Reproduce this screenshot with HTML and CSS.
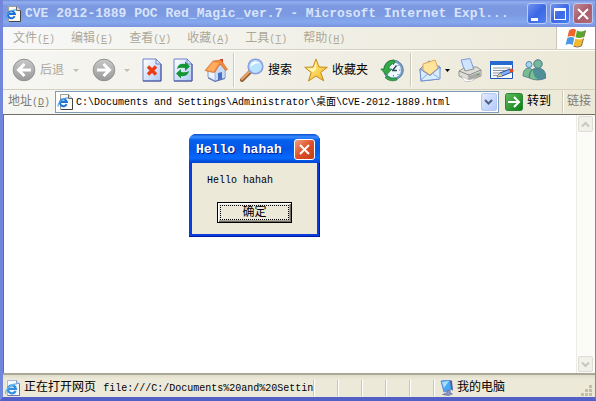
FILE: index.html
```html
<!DOCTYPE html>
<html lang="zh-CN">
<head>
    <meta charset="UTF-8">
    <title>CVE 2012-1889 POC Red_Magic_ver.7</title>
    <link rel="stylesheet" href="styles.css">
</head>
<body>

<!-- shared shapes -->
<svg class="defs" width="0" height="0" aria-hidden="true">
    <defs>
        <linearGradient id="g_gray" x1="0" y1="0" x2="0" y2="1"><stop offset="0" stop-color="#c9c9c9"/><stop offset="1" stop-color="#999"/></linearGradient>
        <linearGradient id="g_page" x1="0" y1="0" x2="1" y2="1"><stop offset="0" stop-color="#fff"/><stop offset="1" stop-color="#adc9f5"/></linearGradient>
        <linearGradient id="g_green" x1="0" y1="0" x2="1" y2="1"><stop offset="0" stop-color="#62bd5d"/><stop offset="1" stop-color="#087a13"/></linearGradient>
        <linearGradient id="g_gold" x1="0" y1="0" x2="1" y2="1"><stop offset="0" stop-color="#fff8a0"/><stop offset="1" stop-color="#f7b520"/></linearGradient>
    </defs>
    <symbol id="ie_page" viewBox="0 0 16 16">
        <path d="M3.500.5h8l4 4v11h-12z" fill="#fbfbf4" stroke="#a09f94"/>
        <path d="M11.500.5v4h4" fill="#ddd" stroke="#666"/>
        <path d="M15.500 4.500v11H4" fill="none" stroke="#444"/>
        <path d="M9.600 10.300A3.500 3.500 0 1 1 9.900 8H3.500" fill="none" stroke="#1f6fd8" stroke-width="2"/>
        <path d="M1.500 12.500C-.5 10 6 3.500 11 4" fill="none" stroke="#4aa5ee" stroke-width="1.200"/>
    </symbol>
    <symbol id="ie_status" viewBox="0 0 16 16">
        <path d="M2.500.5h9l3 3v12h-12z" fill="#f4f8ff" stroke="#a9b8dd"/>
        <path d="M14.500 3.500v12h-12" fill="none" stroke="#6876ae"/>
        <path d="M11.500.5v3h3" fill="#d5e0f7" stroke="#8797c6"/>
        <path d="M10.600 11A4 4 0 1 1 10.900 8.800H3.500" fill="none" stroke="#2f8ede" stroke-width="2.200"/>
        <path d="M1 14C-1 11 6 3.500 12 4" fill="none" stroke="#6bbcf2" stroke-width="1.200"/>
    </symbol>
    <symbol id="arrow_circle" viewBox="0 0 24 24">
        <circle cx="12" cy="12" r="10.800" fill="url(#g_gray)" stroke="#929292"/>
        <path d="M12.500 6L6.500 12l6 6M7 12h12" fill="none" stroke="#fff" stroke-width="3"/>
    </symbol>
    <symbol id="page" viewBox="0 0 20 24">
        <path d="M1 1h13l5 5v17H1z" fill="url(#g_page)" stroke="#6d83c9"/>
        <path d="M14 1v5h5z" fill="#dbe8ff" stroke="#6d83c9"/>
        <path d="M19 6v17H1" fill="none" stroke="#465298"/>
    </symbol>
</svg>

<div class="window">
    <header class="titlebar">
        <svg class="icon16"><use href="#ie_page"/></svg>
        <h1 class="titlebar_text">CVE 2012-1889 POC Red_Magic_ver.7 - Microsoft Internet Expl...</h1>
        <div class="titlebar_buttons">
            <button class="win_btn" aria-label="最小化"><svg width="20" height="20"><path d="M4 14h7v3H4z" fill="#fff"/></svg></button>
            <button class="win_btn" aria-label="最大化"><svg width="20" height="20"><path d="M4 4h12v12H4zm1 3v8h10V7z" fill="#fff" fill-rule="evenodd"/></svg></button>
            <button class="win_btn win_btn_close" aria-label="关闭"><svg width="20" height="20"><path d="M5 5l10 10M15 5L5 15" stroke="#fff" stroke-width="2"/></svg></button>
        </div>
    </header>

    <div class="menubar">
        <nav class="menu">
            <button class="menu_item">文件<span class="en">(<u>F</u>)</span></button>
            <button class="menu_item">编辑<span class="en">(<u>E</u>)</span></button>
            <button class="menu_item">查看<span class="en">(<u>V</u>)</span></button>
            <button class="menu_item">收藏<span class="en">(<u>A</u>)</span></button>
            <button class="menu_item">工具<span class="en">(<u>T</u>)</span></button>
            <button class="menu_item">帮助<span class="en">(<u>H</u>)</span></button>
        </nav>
        <div class="brand">
            <svg width="22" height="20" viewBox="0 0 22 20">
                <path d="M4 2.500Q8-.5 11 2L9.500 9Q6.500 7 2.500 9z" fill="#ef6530"/>
                <path d="M12 2.500q4 2 8.500-.3L18.500 9q-4 2-8 .3z" fill="#58a72d"/>
                <path d="M2.300 10q4-2 7 0l-1.600 7Q4.500 15 .5 17z" fill="#4898e5"/>
                <path d="M10.300 10.500q4 2 8 0L16.500 17.500q-4 2-8 .2z" fill="#f4b82b"/>
                <path d="M8.500 18.200q4 1.800 8-.2l2-7.500M18.700 9.300l1.900-6.800" fill="none" stroke="#634e28" stroke-width=".8"/>
            </svg>
        </div>
    </div>

    <div class="toolbar">
        <button class="tool tool_nav" disabled>
            <svg width="24" height="24"><use href="#arrow_circle"/></svg>
            <span class="tool_text">后退</span>
        </button>
        <button class="tool drop" disabled aria-label="后退列表"></button>
        <button class="tool tool_forward" disabled aria-label="前进">
            <svg width="24" height="24"><g transform="matrix(-1 0 0 1 24 0)"><use href="#arrow_circle"/></g></svg>
        </button>
        <button class="tool drop" disabled aria-label="前进列表"></button>
        <div class="tool_group tool_group_page">
            <button class="tool" aria-label="停止">
                <svg width="20" height="24"><use href="#page"/><path d="M6 8.500l8 8M14 8.500l-8 8" stroke="#f03a14" stroke-width="3.400"/></svg>
            </button>
            <button class="tool" aria-label="刷新">
                <svg width="20" height="24"><use href="#page"/>
                    <path d="M4 11q1-6 8-5V3.500l5 5-5 4.500v-3q-5-1-8 1zM16 13q-1 6-8 5v2.500l-5-5L8 11v3q5 1 8-1z" fill="#159536"/>
                </svg>
            </button>
            <button class="tool" aria-label="主页">
                <svg width="24" height="24" viewBox="0 0 24 24">
                    <path d="M4 11l6-7 11 8v8l-10 3-7-4z" fill="#eef4ff" stroke="#8395cf"/>
                    <path d="M11 13v10l10-3v-9l-5-6z" fill="#c9daf8" stroke="#8498cc" stroke-width=".6"/>
                    <path d="M14 15l4-1v7l-4 1.200z" fill="#4871c4"/>
                    <path d="M16 1h3v6h-3z" fill="#d53f25"/>
                    <path d="M9 3l8-1 6.500 9.500-2 1L16 6l-5 8-2 .5-8-2z" fill="#f08b3c" stroke="#c76728" stroke-width=".6"/>
                    <path d="M9 4L2.500 12l7 1.500L15 5z" fill="#ffac61"/>
                    <path d="M4 20l7 3.500 10-3" fill="none" stroke="#6271aa"/>
                </svg>
            </button>
        </div>
        <div class="tool_group tool_group_find">
            <button class="tool">
                <svg width="24" height="24" viewBox="0 0 24 24">
                    <path d="M10 14L2 22" stroke="#9c6338" stroke-width="4" stroke-linecap="round"/>
                    <path d="M9.500 13.500L2 21" stroke="#e9a46a" stroke-width="2" stroke-linecap="round"/>
                    <circle cx="15.500" cy="8.500" r="7.300" fill="#b8e3ff" stroke="#8a9de0" stroke-width="1.600"/>
                    <path d="M10.500 9q0-5 5-5.500 3 0 4 2-5-1-9 3.500z" fill="#fff"/>
                </svg>
                <span class="tool_text">搜索</span>
            </button>
            <button class="tool">
                <svg width="24" height="24" viewBox="0 0 24 24">
                    <path d="M12 1l3 8 8.300.3-6.600 5.200 3 8.300L12 18l-7.500 5 2.700-8.500L.7 9.300 9 9z" fill="url(#g_gold)" stroke="#c48a1c"/>
                    <path d="M12 4l-2 6.500-6 .2 5 3.300 3-2.500z" fill="#fffbbd"/>
                </svg>
                <span class="tool_text">收藏夹</span>
            </button>
            <button class="tool" aria-label="历史">
                <svg width="24" height="24" viewBox="0 0 24 24">
                    <circle cx="13.500" cy="12" r="9.800" fill="#6fa2c8" stroke="#687c94"/>
                    <circle cx="13.500" cy="12" r="7.500" fill="#eef8ff"/>
                    <path d="M13.500 5.500v1.500M13.500 17v1.500M19 12h1.500M17.500 8l1-1M17.500 16l1 1" stroke="#5485b9"/>
                    <path d="M12 12.500h5M12.500 12.500l4-5" stroke="#33475c" stroke-width="1.400"/>
                    <path d="M14 2Q5 2 4 11H.8L6.500 17 12 11H8.800q.7-5 6.200-6zM7 18q4 4 9 2l1 2q-7 2.500-12-2.500z" fill="#35a948" stroke="#16752a" stroke-width=".7"/>
                </svg>
            </button>
        </div>
        <div class="tool_group tool_group_mail">
            <button class="tool tool_mail" aria-label="邮件">
                <svg width="22" height="24" viewBox="0 0 22 24">
                    <path d="M1 11L10 3l11 6-1 12-18 2z" fill="#a9c5f1" stroke="#6d86c6"/>
                    <path d="M4 6l12-4 3 8-8 7-7-5z" fill="#ffe59b" stroke="#e8a64b"/>
                    <path d="M1 11l10 6.500L21 9v12L2 23z" fill="#d6edff" stroke="#778fcf"/>
                    <path d="M2 22l7-6.500M20 20l-7-5" stroke="#8ca9dc"/>
                </svg>
                <svg width="5" height="3"><path d="M0 0h5L2.500 3z"/></svg>
            </button>
            <button class="tool" aria-label="打印">
                <svg width="24" height="24" viewBox="0 0 24 24">
                    <path d="M3 2l9-1.500 4 11-9 2z" fill="#cfe4ff" stroke="#799bd7"/>
                    <path d="M1 13l5-3 1 3 9-2-1-2h4l4 3v6l-12 5L1 18z" fill="#deded8" stroke="#96968f"/>
                    <path d="M1 13l10 4 12-5M11 17v6" fill="none" stroke="#888"/>
                    <path d="M11 18l11-4v4l-11 4z" fill="#a8a8a6"/>
                    <path d="M3 18l8 4 7-2-5 3.500H7z" fill="#fff" stroke="#aaa" stroke-width=".5"/>
                    <path d="M19 16h2v1h-2z" fill="#4ca34f"/>
                </svg>
            </button>
            <button class="tool" aria-label="编辑">
                <svg width="24" height="24" viewBox="0 0 24 24">
                    <path d="M.5 3.500h22v17H.5z" fill="#f7faff" stroke="#1f56b8"/>
                    <path d="M0 3h23v4H0z" fill="#2769d0"/>
                    <path d="M3 10h17M3 12.500h14M3 15h10M3 17.500h5" stroke="#91969e"/>
                    <path d="M7 19l3-4 10-4 2 3-10 4z" fill="#83b3f5" stroke="#224f9d"/>
                    <path d="M7 19l3-4 2 3z" fill="#f3c986"/>
                    <circle cx="21.500" cy="12.500" r="2" fill="#e04822"/>
                </svg>
            </button>
            <button class="tool" aria-label="Messenger">
                <svg width="24" height="24" viewBox="0 0 24 24">
                    <path d="M1 18q0-8 6-8 4 0 5 8-5 3-11 0z" fill="#79bc8f" stroke="#5a8da0"/>
                    <circle cx="7" cy="6.500" r="3" fill="#a7d7e8" stroke="#5887ad"/>
                    <path d="M7 20q0-10 8.500-10T24 20q-8 4-17 0z" fill="#508f97" stroke="#436e8b" stroke-width=".7"/>
                    <path d="M11 12q-3 2-3 8 5 2 8 1-5-2-5-9z" fill="#7ac28a"/>
                    <circle cx="16" cy="6" r="4.200" fill="#75b99a" stroke="#46758e"/>
                </svg>
            </button>
        </div>
    </div>

    <form class="address">
        <label class="address_label" for="url">地址<span class="en">(<u>D</u>)</span></label>
        <div class="combo">
            <svg class="icon16"><use href="#ie_page"/></svg>
            <input class="combo_input" id="url" type="text" value="C:\Documents and Settings\Administrator\桌面\CVE-2012-1889.html">
            <button class="combo_btn" type="button" aria-label="地址列表"><svg width="9" height="7"><path d="M1 1l3.500 3.500L8 1" fill="none" stroke="#4d6185" stroke-width="2"/></svg></button>
        </div>
        <button class="go" type="button">
            <svg width="18" height="18"><rect x=".5" y=".5" width="17" height="17" rx="2" fill="url(#g_green)" stroke="#278936"/><path d="M3 9h11M9 4l5 5-5 5" fill="none" stroke="#fff" stroke-width="2"/></svg>
            <span>转到</span>
        </button>
        <a class="links" href="#">链接</a>
    </form>

    <main class="view">
        <div class="page"></div>
        <div class="scrollbar">
            <button class="scroll_btn" disabled aria-label="向上"><svg width="9" height="7"><path d="M1 5.500L4.500 2 8 5.500" fill="none" stroke="#c9c7ba" stroke-width="2"/></svg></button>
            <button class="scroll_btn" disabled aria-label="向下"><svg width="9" height="7"><path d="M1 1.500L4.500 5 8 1.500" fill="none" stroke="#c9c7ba" stroke-width="2"/></svg></button>
        </div>

        <div class="dialog" role="dialog" aria-labelledby="dialog_title">
            <div class="dialog_head">
                <h2 class="dialog_title" id="dialog_title">Hello hahah</h2>
                <button class="dialog_close" aria-label="关闭"><svg width="19" height="19"><path d="M5 5l9 9M14 5l-9 9" stroke="#fff" stroke-width="2"/></svg></button>
            </div>
            <div class="dialog_body">
                <p class="dialog_text">Hello hahah</p>
                <button class="dialog_ok"><span class="dialog_ok_focus">确定</span></button>
            </div>
        </div>
    </main>

    <footer class="status">
        <svg class="icon16"><use href="#ie_status"/></svg>
        <div class="status_text">正在打开网页 <span class="en">file:///C:/Documents%20and%20Settin</span></div>
        <div class="status_cell"></div>
        <div class="status_cell"></div>
        <div class="status_cell"></div>
        <div class="status_cell"></div>
        <div class="status_cell"></div>
        <div class="status_zone">
            <svg width="14" height="16" viewBox="0 0 14 16">
                <path d="M1 1l9-1 2 9-8 3z" fill="#48a9f5" stroke="#668ad0"/>
                <path d="M2 2l7-1-5 7z" fill="#a8e1ff"/>
                <path d="M10 0l2 1 1 10-2-2z" fill="#435ca9"/>
                <path d="M7 11l3-1 .5 3 2 1-4 1.500-6-1 4-1.500z" fill="#8a94c8" stroke="#5c6595" stroke-width=".6"/>
            </svg>
            <span>我的电脑</span>
        </div>
        <svg class="grip" width="12" height="12"><path d="M8 0h3v3H8zM4 4h3v3H4zM8 4h3v3H8zM0 8h3v3H0zM4 8h3v3H4zM8 8h3v3H8z" fill="#c1bda9"/></svg>
    </footer>
</div>

</body>
</html>
```

FILE: styles.css
```css
*{
    margin: 0;
    padding: 0;
    box-sizing: border-box;
}
body{
    font-family: "Liberation Mono", "Noto Sans CJK SC", monospace;
    font-size: 12px;
    line-height: 16px;
    color: #000;
    background: #ece9d8;
    overflow: hidden;
}
button,
input{
    font: inherit;
    color: inherit;
    border: 0;
    background: none;
}
svg{
    display: block;
    flex: none;
}
.defs{
    position: absolute;
}
.en{
    font-size: 10px;
}
.icon16{
    width: 16px;
    height: 16px;
}
.window{
    display: flex;
    flex-direction: column;
    height: 100vh;
    border: solid #7286dc;
    border-width: 0 1px 4px 3px;
    border-bottom-color: #5260c8;
}

/* title bar */
.titlebar{
    display: flex;
    align-items: center;
    gap: 4px;
    flex: none;
    height: 27px;
    padding: 0 2px;
    background: linear-gradient(#6f8bd9, #93aeef 2px, #7b98e1 6px, #7b98e1 14px, #84a8ee 22px, #7a93df);
}
.titlebar_text{
    flex: 1;
    min-width: 0;
    overflow: hidden;
    white-space: nowrap;
    font-size: 13px;
    color: #d8e4fa;
}
.titlebar_buttons{
    display: flex;
    gap: 3px;
}
.win_btn{
    width: 20px;
    height: 21px;
    border: 1px solid #bccbf5;
    border-radius: 3px;
    background: linear-gradient(135deg, #7194ee, #3c68e4 50%, #4a80f5);
    overflow: hidden;
}
.win_btn svg{
    margin: -1px;
}
.win_btn_close{
    background: linear-gradient(135deg, #c08898, #a85d6c 50%, #b2697a);
}

/* menu */
.menubar{
    display: flex;
    flex: none;
    height: 23px;
    background: linear-gradient(90deg, #f7f8f8, #ece9d8);
    border-bottom: 1px solid #d4d0be;
}
.menu{
    display: flex;
    flex: 1;
    align-items: center;
    gap: 16px;
    padding: 2px 0 0 10px;
}
.menu_item{
    color: #aca899;
    white-space: nowrap;
}
.brand{
    display: flex;
    align-items: center;
    justify-content: center;
    width: 39px;
    background: #fff;
    border-left: 1px solid #c9c6b6;
}

/* toolbar */
.toolbar{
    display: flex;
    align-items: center;
    flex: none;
    height: 40px;
    padding-left: 9px;
    background: linear-gradient(90deg, #f6f6f3, #ece9d8);
    border-top: 1px solid #fff;
    border-bottom: 1px solid #d4d0be;
}
.tool{
    display: flex;
    align-items: center;
    gap: 4px;
    white-space: nowrap;
}
.tool:disabled{
    color: #aca899;
}
.tool_text{
    padding-top: 2px;
}
.drop{
    border: solid transparent;
    border-width: 3px 3px 0;
    border-top-color: #c2bfb0;
}
.tool_nav{
    margin-right: 9px;
}
.tool_forward{
    margin: 0 8px 0 13px;
}
.tool_group{
    display: flex;
    align-items: center;
    height: 34px;
}
.tool_group_page{
    gap: 11px;
    padding: 0 5px 0 12px;
}
.tool_group_find{
    gap: 12px;
    padding: 0 6px;
}
.tool_group_mail{
    gap: 8px;
    padding: 0 8px;
}
.tool_group_find,
.tool_group_mail{
    border-left: 1px solid #cdcab9;
    box-shadow: inset 1px 0 #fff;
}

/* address bar */
.address{
    display: flex;
    align-items: center;
    flex: none;
    height: 24px;
    padding-left: 5px;
    background: linear-gradient(90deg, #f6f6f3, #ece9d8);
}
.address_label{
    width: 47px;
    color: #7f7c73;
    white-space: nowrap;
}
.combo{
    display: flex;
    align-items: center;
    flex: 1;
    height: 22px;
    padding: 1px;
    gap: 3px;
    background: #fff;
    border: 1px solid #7f9db9;
}
.combo_input{
    flex: 1;
    min-width: 0;
    padding-top: 2px;
    font-size: 10px;
    outline: 0;
}
.combo_btn{
    display: flex;
    align-items: center;
    justify-content: center;
    width: 16px;
    height: 18px;
    border: 1px solid #b5c8f2;
    border-radius: 2px;
    background: linear-gradient(135deg, #e0eafe, #b5cbfb);
}
.go{
    display: flex;
    align-items: center;
    gap: 4px;
    padding: 0 11px 0 6px;
}
.links{
    height: 22px;
    line-height: 22px;
    width: 33px;
    padding-left: 4px;
    border-left: 1px solid #cdcab9;
    box-shadow: inset 1px 0 #fff;
    color: #7f7c73;
    text-decoration: none;
}

/* page area */
.view{
    display: flex;
    flex: 1;
    min-height: 0;
    position: relative;
    border: solid #716f64;
    border-width: 1px 0 0 1px;
    background: #fff;
}
.page{
    flex: 1;
}
.scrollbar{
    display: flex;
    flex-direction: column;
    justify-content: space-between;
    width: 19px;
    padding: 1px;
    background: #fbfbf8;
    border-left: 1px solid #eeede5;
}
.scroll_btn{
    display: flex;
    align-items: center;
    justify-content: center;
    width: 15px;
    height: 16px;
    border: 1px solid #deddd3;
    border-radius: 2px;
    background: #f1f0ea;
}

/* alert box */
.dialog{
    position: absolute;
    left: 185px;
    top: 19px;
    width: 131px;
    padding: 0 3px 3px;
    border-radius: 7px 7px 0 0;
    background: #0a3bdb;
    box-shadow: inset -1px -1px #0019a0;
}
.dialog_head{
    display: flex;
    align-items: center;
    justify-content: space-between;
    height: 29px;
    margin: 0 -3px;
    padding: 2px 5px 0 7px;
    border-radius: 7px 7px 0 0;
    background: linear-gradient(#0a4fd0, #3c8cff 3px, #0460ee 6px, #0457e6 15px, #0669ff 24px, #0442cc);
}
.dialog_title{
    font-size: 13px;
    color: #fff;
    text-shadow: 1px 1px #0a1883;
    white-space: nowrap;
}
.dialog_close{
    width: 21px;
    height: 21px;
    border: 1px solid #fff;
    border-radius: 3px;
    background: linear-gradient(135deg, #f0a080, #e0502a 50%, #c33c15);
}
.dialog_body{
    padding: 10px 15px 11px;
    background: #ece9d8;
}
.dialog_text{
    font-size: 10px;
    margin-bottom: 13px;
}
.dialog_ok{
    display: block;
    width: 75px;
    height: 21px;
    margin: 0 auto;
    padding: 2px;
    border: 1px solid #000;
    background: #ece9d8;
    box-shadow: inset 1px 1px #fff, inset -1px -1px #716f64, inset -2px -2px #aca899;
}
.dialog_ok_focus{
    display: block;
    height: 15px;
    line-height: 15px;
    border: 1px dotted #000;
}

/* status bar */
.status{
    display: flex;
    align-items: center;
    flex: none;
    height: 24px;
    padding: 3px 2px 0;
    border-top: 2px solid #aca899;
    background: linear-gradient(#dfdccb, #ece9d8 4px);
}
.status_text{
    flex: 1;
    min-width: 0;
    padding: 1px 0 0 3px;
    overflow: hidden;
    white-space: nowrap;
}
.status_cell,
.status_zone{
    width: 24px;
    height: 16px;
    border-left: 1px solid #c9c6b5;
    box-shadow: inset 1px 0 #fff;
}
.status_zone{
    display: flex;
    align-items: center;
    gap: 3px;
    width: 148px;
    padding-left: 6px;
}
.grip{
    align-self: flex-end;
}
```
